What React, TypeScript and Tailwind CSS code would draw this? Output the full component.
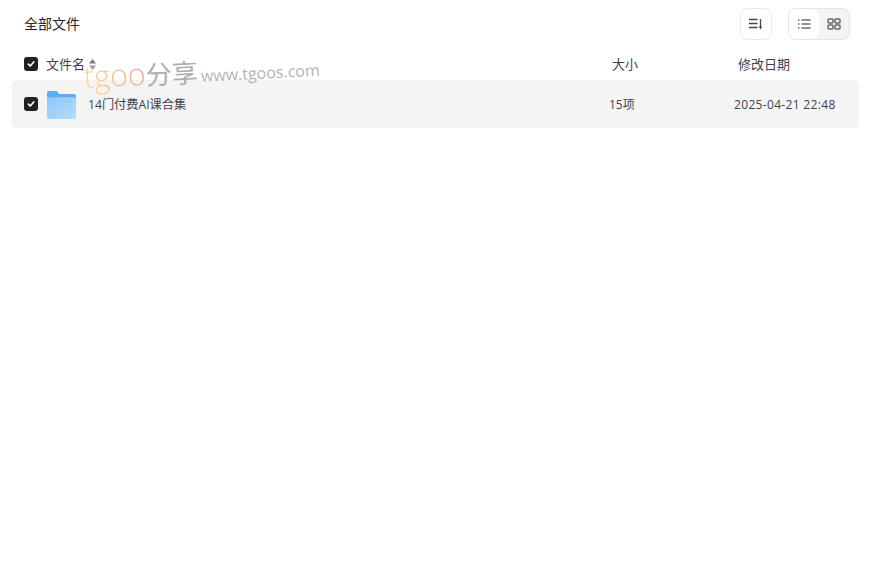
import React from 'react';

const font = { fontFamily: '"Open Sans", "Noto Sans CJK SC", sans-serif' };

const Check = () => (
  <span className="flex h-[14px] w-[14px] shrink-0 items-center justify-center rounded-[3px] bg-[#1f2028]">
    <svg width="10" height="10" viewBox="0 0 10 10" fill="none">
      <path d="M2.4 5.2 4.3 7 7.7 3" stroke="#fff" strokeWidth="1.7" strokeLinecap="round" strokeLinejoin="round" />
    </svg>
  </span>
);

const Folder = () => (
  <svg width="29" height="28" viewBox="0 0 30 29" className="block shrink-0">
    <defs>
      <linearGradient id="folderFront" x1="0" y1="0" x2="1" y2="1">
        <stop offset="0" stopColor="#8cc8f8" />
        <stop offset="1" stopColor="#b5dcfb" />
      </linearGradient>
    </defs>
    <path d="M0 2a2 2 0 0 1 2-2h7.500a2 2 0 0 1 1.500.7L12.500 3H28a2 2 0 0 1 2 2v4H0z" fill="#5fadf1" />
    <path d="M0 6.500h28a2 2 0 0 1 2 2V27a2 2 0 0 1-2 2H2a2 2 0 0 1-2-2z" fill="url(#folderFront)" />
    <rect x="22" y="10" width="3" height="2" fill="#8fc5f3" />
  </svg>
);

export default function App() {
  return (
    <div className="relative min-h-[583px] bg-white text-[13px] text-[#3f4150]" style={font}>
      <div className="flex h-[48px] items-center justify-between px-[24px]">
        <span className="mb-[2px] text-[14px] text-[#25262b]">全部文件</span>
        <div className="flex items-center gap-[16px]">
          <button className="flex h-[32px] w-[32px] items-center justify-center rounded-[8px] border border-[#e8e8ea]">
            <svg width="16" height="14" viewBox="0 0 16 14" fill="none" stroke="#44454d" strokeWidth="1.300">
              <path d="M1 2.500h8.500M1 6.500h8.500M1 10.500h8.500" />
              <path d="M12.500 2v8" />
              <path d="M10.800 9.500h3.400l-1.700 3z" fill="#44454d" stroke="none" />
            </svg>
          </button>
          <div className="flex h-[32px] w-[62px] rounded-[8px] border border-[#e4e4e6] bg-[#f4f4f5]">
            <span className="flex w-[30px] items-center justify-center rounded-[7px] bg-white">
              <svg width="14" height="12" viewBox="0 0 14 12" fill="none" stroke="#26272e" strokeWidth="1.200">
                <path d="M1 2h1.500M1 6h1.500M1 10h1.500M4.500 2H13.500M4.500 6H13.500M4.500 10H13.500" />
              </svg>
            </span>
            <span className="flex flex-1 items-center justify-center">
              <svg width="14" height="12" viewBox="0 0 14 12" fill="none" stroke="#66676f" strokeWidth="1.500">
                <rect x="1" y="1" width="5" height="4" rx="1" />
                <rect x="8" y="1" width="5" height="4" rx="1" />
                <rect x="1" y="7" width="5" height="4" rx="1" />
                <rect x="8" y="7" width="5" height="4" rx="1" />
              </svg>
            </span>
          </div>
        </div>
      </div>

      <div className="flex h-[32px] items-center pl-[24px] pr-[12px]">
        <Check />
        <span className="ml-[8px] mt-[1px]">文件名</span>
        <svg width="9" height="13" viewBox="0 0 9 13" className="ml-[3px]">
          <path d="M4.500 1 8 5.500H1z" fill="#777881" />
          <path d="M4.500 12 1 7.500h7z" fill="#9a9ba1" />
        </svg>
        <span className="ml-[515px] mt-[1px] w-[126px]">大小</span>
        <span className="mt-[1px]">修改日期</span>
      </div>

      <div className="ml-[12px] mr-[15px] flex h-[48px] items-center rounded-[5px] bg-[#f4f4f4] pl-[12px] text-[12px]">
        <Check />
        <span className="ml-[9px] mt-[1px] block"><Folder /></span>
        <span className="ml-[12px] mt-[2px] w-[521px] text-[12.200px]">14门付费AI课合集</span>
        <span className="mt-[1px] w-[125px]">15项</span>
        <span className="mt-[1px] tracking-[0.33px]">2025-04-21 22:48</span>
      </div>

      <div className="pointer-events-none absolute left-[84px] top-[56px] flex origin-left -rotate-[3deg] items-baseline whitespace-nowrap">
        <span className="bg-gradient-to-r from-[#fbd98e] to-[#fba498] bg-clip-text text-[30.500px] font-light leading-[40px] text-transparent">tgoo</span>
        <span className="text-[26px] leading-[40px] text-[#adadad]">分享</span>
        <span className="ml-[3px] text-[16px] leading-[40px] text-[#b4b4b4]">www.tgoos.com</span>
      </div>
    </div>
  );
}
